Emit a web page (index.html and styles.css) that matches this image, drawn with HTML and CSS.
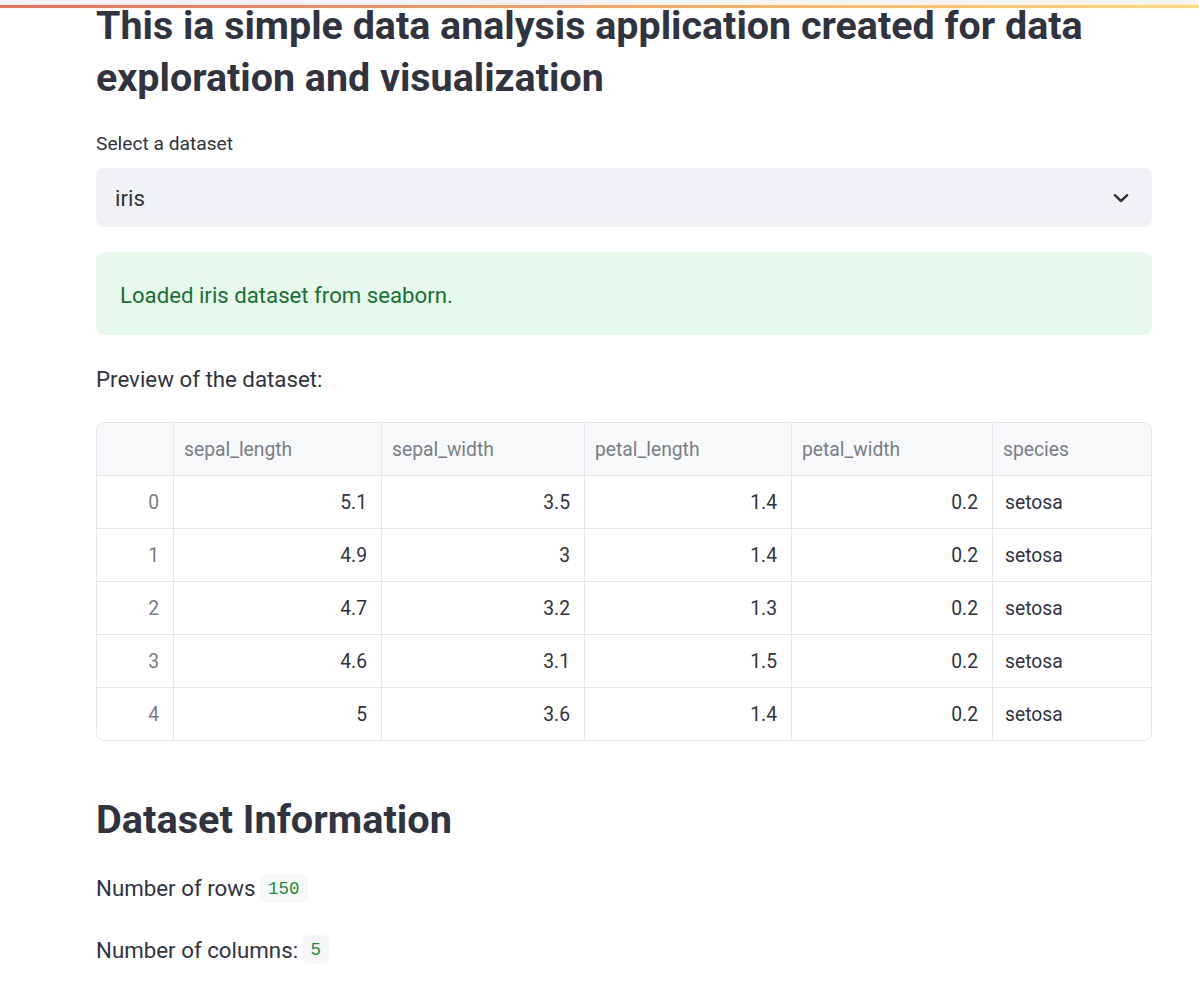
FILE: index.html
```html
<!DOCTYPE html>
<html lang="en">
<head>
<meta charset="utf-8">
<title>Data analysis app</title>
<link rel="stylesheet" href="styles.css">
</head>
<body>
<header class="app-header"><div class="decoration"></div></header>
<main class="main">
  <h1 class="title">This ia simple data analysis application created for data exploration and visualization</h1>

  <label class="widget-label">Select a dataset</label>
  <div class="select">
    <span class="select-value">iris</span>
    <svg class="chevron" width="20" height="20" viewBox="0 0 20 20"><path d="M3.8 7.2 L10 13 L16.2 7.2" fill="none" stroke="#31333f" stroke-width="2.4" stroke-linecap="round" stroke-linejoin="round"/></svg>
  </div>

  <div class="alert-success">Loaded iris dataset from seaborn.</div>

  <p class="text preview">Preview of the dataset:</p>

  <div class="dataframe">
    <div class="th idx"></div><div class="th">sepal_length</div><div class="th">sepal_width</div><div class="th">petal_length</div><div class="th">petal_width</div><div class="th">species</div>

    <div class="td idx">0</div><div class="td num">5.1</div><div class="td num">3.5</div><div class="td num">1.4</div><div class="td num">0.2</div><div class="td">setosa</div>
    <div class="td idx">1</div><div class="td num">4.9</div><div class="td num">3</div><div class="td num">1.4</div><div class="td num">0.2</div><div class="td">setosa</div>
    <div class="td idx">2</div><div class="td num">4.7</div><div class="td num">3.2</div><div class="td num">1.3</div><div class="td num">0.2</div><div class="td">setosa</div>
    <div class="td idx">3</div><div class="td num">4.6</div><div class="td num">3.1</div><div class="td num">1.5</div><div class="td num">0.2</div><div class="td">setosa</div>
    <div class="td idx last">4</div><div class="td num last">5</div><div class="td num last">3.6</div><div class="td num last">1.4</div><div class="td num last">0.2</div><div class="td last">setosa</div>
  </div>

  <h2 class="subheader">Dataset Information</h2>
  <p class="text info">Number of rows <code class="code">150</code></p>
  <p class="text info cols">Number of columns: <code class="code">5</code></p>
</main>
</body>
</html>
```
FILE: styles.css
```css
html, body {
  margin: 0;
  padding: 0;
  background: #ffffff;
}
body {
  font-family: Roboto, "Liberation Sans", sans-serif;
  color: #31333f;
  width: 1199px;
  height: 986px;
  overflow: hidden;
}
.app-header {
  position: absolute;
  top: 0;
  left: 0;
  right: 0;
  height: 5px;
  background: #f4f4f5;
  z-index: 5;
}
.decoration {
  position: absolute;
  left: 0;
  right: 0;
  top: 5px;
  height: 3px;
  background: linear-gradient(90deg, #ff6a55, #ffa864 55%, #ffd96e);
}
.main {
  margin-left: 96px;
  width: 1056px;
  display: flex;
  flex-direction: column;
}
.title {
  margin: 0;
  font-size: 39.4px;
  font-weight: 700;
  line-height: 52px;
  color: #31333f;
}
.widget-label {
  margin-top: 28px;
  height: 24px;
  line-height: 24px;
  font-size: 19.2px;
  margin-bottom: 12px;
}
.select {
  height: 59px;
  background: #f0f2f6;
  border-radius: 8px;
  display: flex;
  align-items: center;
  justify-content: space-between;
  padding: 0 21px 0 19px;
  box-sizing: border-box;
}
.select-value {
  font-size: 22.3px;
}
.chevron {
  display: block;
}
.alert-success {
  margin-top: 25px;
  height: 83px;
  box-sizing: border-box;
  padding: 2px 24px 0 24px;
  display: flex;
  align-items: center;
  background: #e7f8ec;
  color: #177233;
  border-radius: 8px;
  font-size: 22.2px;
}
.text {
  margin: 0;
  font-size: 22.3px;
  line-height: 32px;
}
.preview {
  margin-top: 28px;
}
.dataframe {
  margin-top: 27px;
  display: grid;
  grid-template-columns: 77px 208px 203px 207px 201px 160px;
  grid-auto-rows: 53px;
  border: 1px solid #e4e6eb;
  border-radius: 8px;
  overflow: hidden;
  font-size: 19.3px;
  box-sizing: border-box;
  height: 319px;
}
.th, .td {
  display: flex;
  align-items: center;
  border-right: 1px solid #e4e6eb;
  border-bottom: 1px solid #e4e6eb;
  box-sizing: border-box;
  white-space: nowrap;
}
.th:nth-child(6n), .td:nth-child(6n) {
  border-right: none;
}
.th {
  background: #f8f9fb;
  color: #7b7e86;
  padding: 0 10px;
}
.td {
  padding: 0 12px;
  background: #ffffff;
}
.td.last {
  border-bottom: none;
}
.td.num {
  justify-content: flex-end;
  padding-right: 14px;
}
.td.idx {
  justify-content: flex-end;
  color: #7b7e86;
  padding-right: 14px;
}
.th.idx {
  padding: 0;
}
.subheader {
  margin: 53px 0 0 0;
  font-size: 39.7px;
  font-weight: 700;
  line-height: 52px;
}
.info {
  margin-top: 26px;
}
.info.cols {
  margin-top: 29px;
}
.code {
  display: inline-block;
  height: 29px;
  line-height: 30px;
  vertical-align: middle;
  box-sizing: border-box;
  font-family: "Liberation Mono", "DejaVu Sans Mono", monospace;
  font-size: 17.5px;
  color: #218a40;
  background: #f6f7f9;
  border-radius: 6px;
  padding: 0 8px;
  margin-left: -1px;
  position: relative;
  top: -2px;
}
```
